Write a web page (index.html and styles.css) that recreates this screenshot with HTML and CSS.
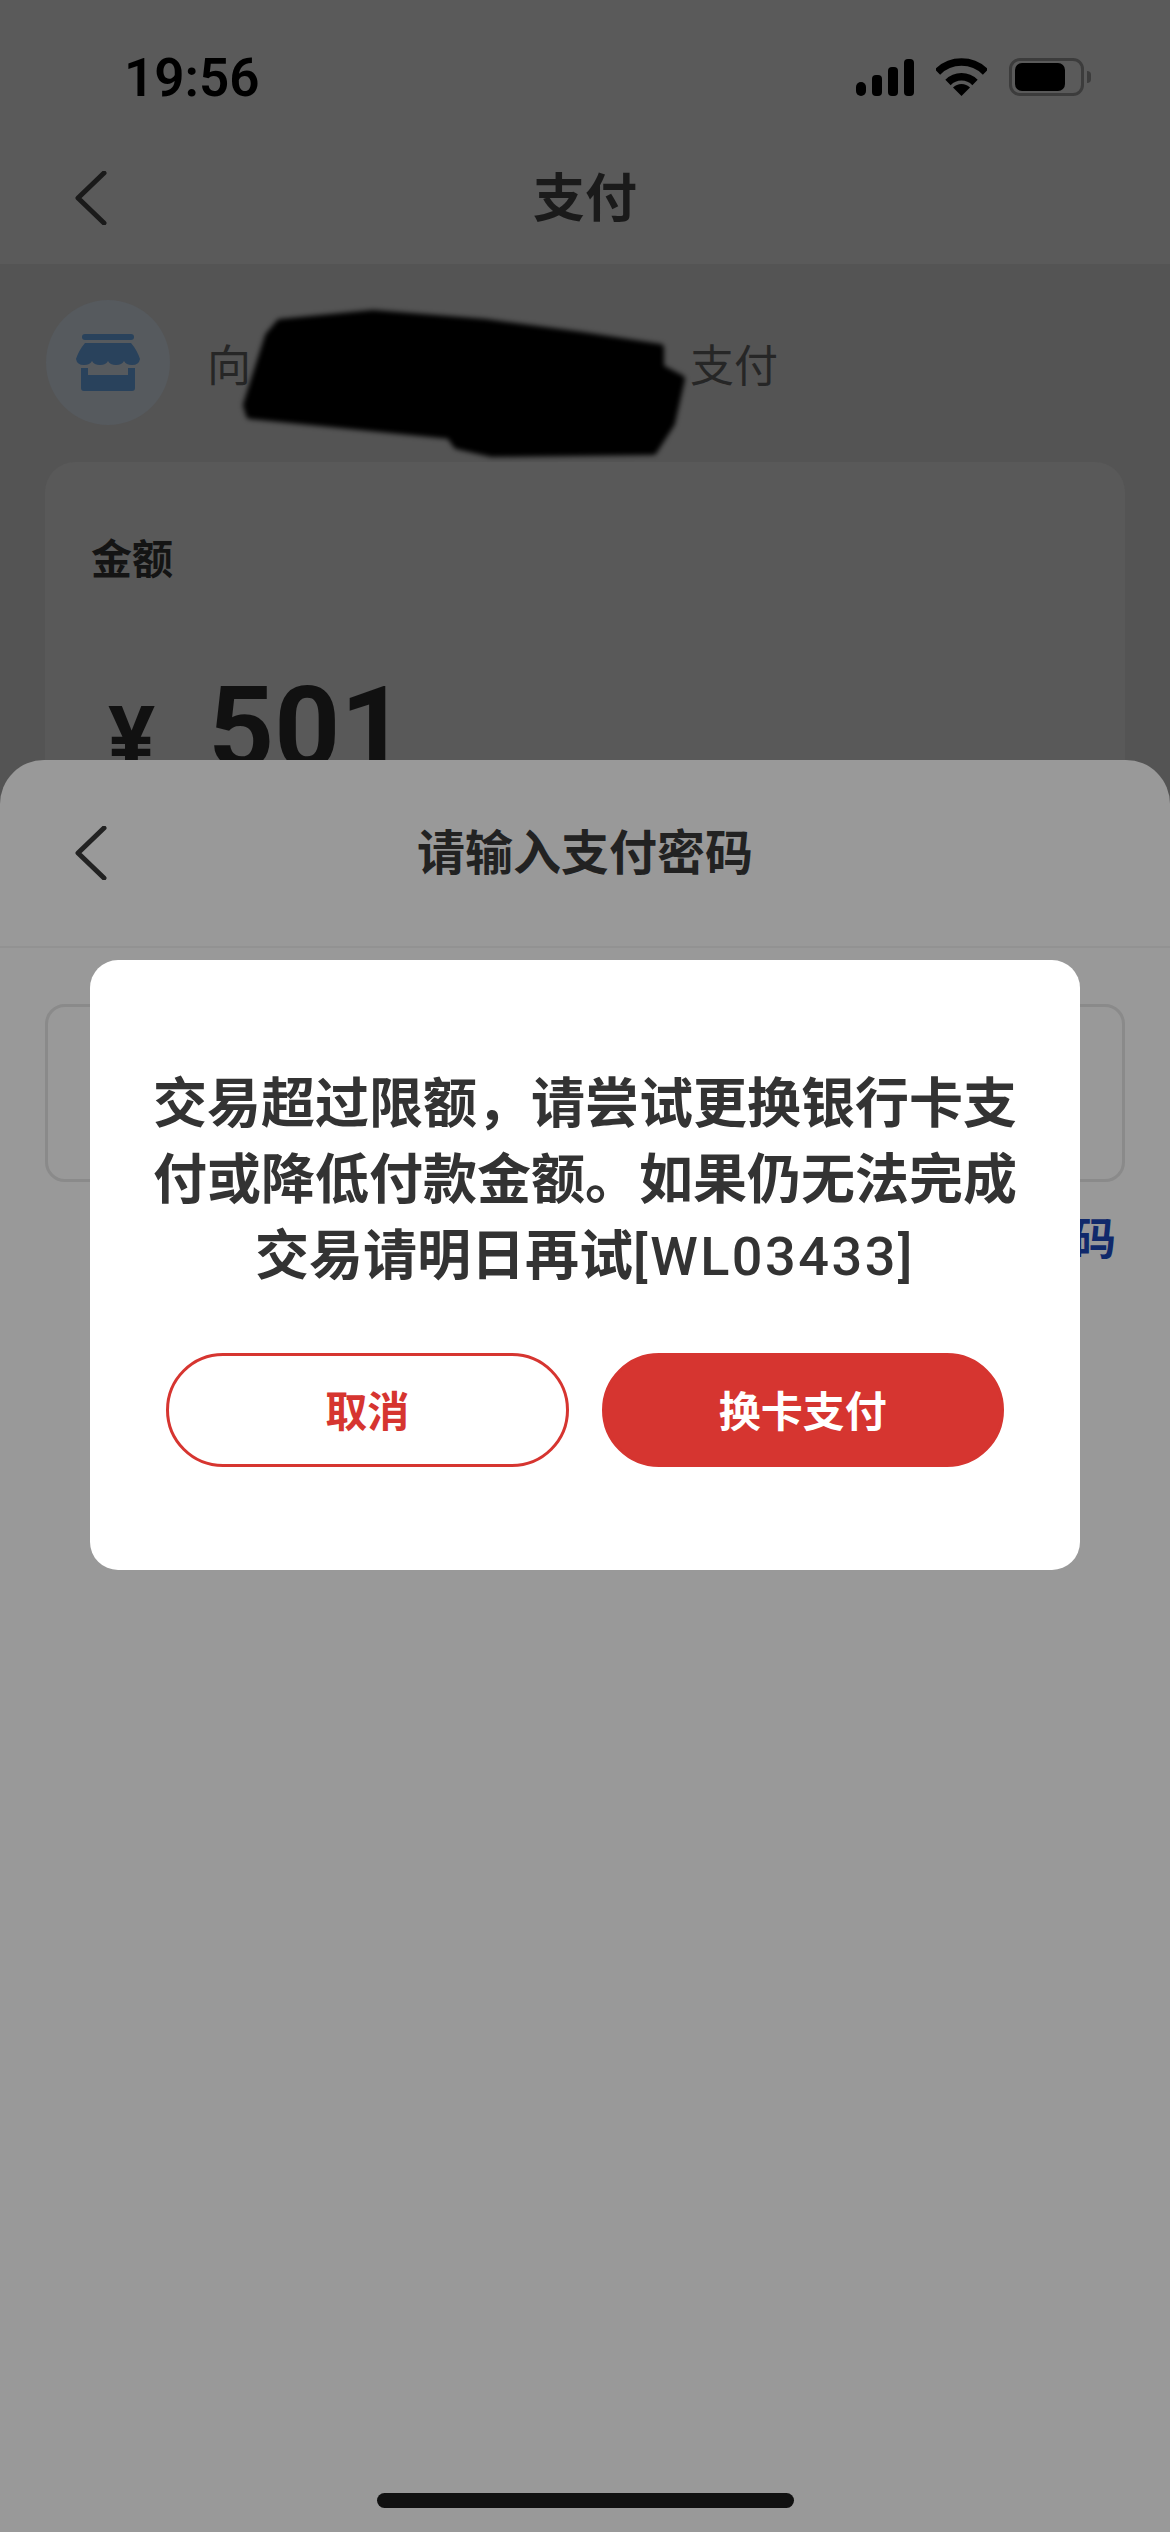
FILE: index.html
```html
<!DOCTYPE html>
<html lang="zh-CN">
<head>
  <meta charset="UTF-8">
  <title>支付</title>
  <link rel="stylesheet" href="styles.css">
</head>
<body>
  <div class="page">
    <!-- 状态栏 -->
    <div class="status-bar">
      <span class="time">19:56</span>
      <div class="status-icons">
        <svg class="signal" width="58" height="37" viewBox="0 0 58 37">
          <rect x="0" y="23" width="10" height="14" rx="5"/>
          <rect x="16" y="16" width="10" height="21" rx="4"/>
          <rect x="32" y="8" width="10" height="29" rx="4"/>
          <rect x="48" y="0" width="10" height="37" rx="4"/>
        </svg>
        <svg class="wifi" width="51" height="38" viewBox="0 0 51 38">
          <path d="M1.5 14 A34 34 0 0 1 49.5 14" fill="none" stroke="#000" stroke-width="7.5"/>
          <path d="M12 24.5 A19 19 0 0 1 39 24.5" fill="none" stroke="#000" stroke-width="7.5"/>
          <path d="M25.5 38 L17 29.5 A12 12 0 0 1 34 29.5 Z"/>
        </svg>
        <div class="battery">
          <div class="battery-body"><div class="battery-fill"></div></div>
          <div class="battery-nub"></div>
        </div>
      </div>
    </div>

    <!-- 导航栏 -->
    <div class="nav">
      <svg class="back" width="32" height="54" viewBox="0 0 32 54">
        <polyline points="29,2 3,27 29,52"/>
      </svg>
      <span class="nav-title">支付</span>
    </div>

    <!-- 收款方 -->
    <div class="merchant">
      <div class="merchant-logo">
        <svg width="66" height="57" viewBox="0 0 66 57">
          <rect x="7" y="0" width="52" height="6" rx="3" fill="#29425c"/>
          <path d="M10 9 H56 Q62 16 65 25 Q64 31 57 31 Q51 31 49 27 Q47 31 41 31 Q35 31 33 27 Q31 31 25 31 Q19 31 17 27 Q15 31 9 31 Q2 31 1 25 Q4 16 10 9 Z" fill="#29425c"/>
          <path d="M6 34 H13 V41 H53 V34 H60 V54 Q60 57 57 57 H9 Q6 57 6 54 Z" fill="#29425c"/>
        </svg>
      </div>
      <div class="merchant-text">
        <span>向</span>
        <span class="merchant-name"></span>
        <span>支付</span>
      </div>
      <!-- 涂黑的商户名 -->
      <svg class="scribble" width="470" height="170" viewBox="0 0 470 170">
        <path d="M48 25 L141 16 L253 25 L350 38 L428 50 L428 70 L449 81 L439 125 L421 153 L260 155 L225 147 L218 137 L18 117 L15 107 L37 38 Z" stroke="#000" stroke-width="8" stroke-linejoin="round"/>
      </svg>
    </div>

    <!-- 金额 -->
    <div class="amount-card">
      <div class="amount-label">金额</div>
      <div class="amount-value">
        <span class="currency">¥</span>
        <span class="amount-num">501</span>
      </div>
    </div>

    <!-- 输入密码弹层 -->
    <div class="sheet">
      <div class="sheet-head">
        <svg class="back" width="32" height="54" viewBox="0 0 32 54">
          <polyline points="29,2 3,27 29,52"/>
        </svg>
        <span class="sheet-title">请输入支付密码</span>
      </div>
      <div class="pwd-box"></div>
      <div class="forgot">码</div>
    </div>

    <!-- 提示框 -->
    <div class="dialog">
      <p class="dialog-text">交易超过限额，请尝试更换银行卡支付或降低付款金额。如果仍无法完成交易请明日再试<span class="code">[WL03433]</span></p>
      <div class="dialog-btns">
        <div class="btn btn-cancel">取消</div>
        <div class="btn btn-ok">换卡支付</div>
      </div>
    </div>

    <div class="home-bar"></div>
  </div>
</body>
</html>
```

FILE: styles.css
```css
* {
  margin: 0;
  padding: 0;
  box-sizing: border-box;
}

body {
  font-family: "Liberation Sans", "Noto Sans CJK SC", sans-serif;
  background-color: #545454;
}

.page {
  position: relative;
  width: 1170px;
  height: 2532px;
  overflow: hidden;
  background-color: #545454;
}

/* 状态栏 */
.status-bar {
  display: flex;
  justify-content: space-between;
  height: 132px;
  padding: 58px 79px 0 124px;
  background-color: #5a5a5a;
}

.time {
  font-family: Roboto, sans-serif;
  font-size: 53px;
  font-weight: 600;
  line-height: 40px;
  color: #000;
}

.status-icons {
  display: flex;
  align-items: flex-start;
  gap: 22px;
}

.signal {
  margin-top: 1px;
}

.battery {
  display: flex;
  align-items: center;
  gap: 3px;
  height: 38px;
}

.battery-body {
  width: 75px;
  height: 38px;
  padding: 2px 3px;
  border: 3px solid #3c3c3c;
  border-radius: 11px;
}

.battery-fill {
  width: 50px;
  height: 100%;
  background-color: #000;
  border-radius: 7px;
}

.battery-nub {
  width: 4px;
  height: 12px;
  background-color: #3c3c3c;
  border-radius: 0 4px 4px 0;
}

/* 导航栏 */
.nav {
  position: relative;
  display: flex;
  align-items: center;
  justify-content: center;
  height: 132px;
  padding-bottom: 8px;
  background-color: #5a5a5a;
}

.back {
  position: absolute;
  left: 75px;
  top: 39px;
}

.back polyline {
  fill: none;
  stroke: #1a1a1a;
  stroke-width: 5;
  stroke-linecap: round;
  stroke-linejoin: round;
}

.nav-title {
  font-size: 52px;
  font-weight: 600;
  color: #1a1a1a;
}

/* 收款方 */
.merchant {
  position: relative;
  display: flex;
  align-items: center;
  gap: 37px;
  margin: 36px 0 37px 46px;
}

.merchant-logo {
  display: flex;
  align-items: center;
  justify-content: center;
  width: 124px;
  height: 125px;
  background-color: #565a5e;
  border-radius: 50%;
}

.merchant-text {
  display: flex;
  align-items: center;
  font-size: 44px;
  color: #262626;
}

.merchant-name {
  width: 439px;
}

.scribble {
  position: absolute;
  left: 186px;
  top: -2px;
  filter: blur(2.5px);
}

/* 金额 */
.amount-card {
  height: 460px;
  margin: 0 45px;
  padding: 70px 46px 0;
  background-color: #595959;
  border-radius: 30px;
}

.amount-label {
  font-size: 41px;
  font-weight: 600;
  line-height: 56px;
  color: #141414;
}

.amount-value {
  display: flex;
  align-items: baseline;
  gap: 53px;
  margin-top: 86px;
  padding-left: 17px;
  color: #111;
  font-family: Roboto, sans-serif;
  font-weight: 700;
}

.currency {
  font-size: 88px;
}

.amount-num {
  font-size: 115px;
  line-height: 110px;
}

/* 输入密码弹层 */
.sheet {
  position: absolute;
  left: 0;
  right: 0;
  top: 760px;
  bottom: 0;
  background-color: #999;
  border-radius: 44px 44px 0 0;
}

.sheet-head {
  position: relative;
  display: flex;
  align-items: center;
  justify-content: center;
  height: 188px;
  padding-bottom: 8px;
  border-bottom: 2px solid #929292;
}

.sheet-head .back {
  top: 66px;
}

.sheet-head .back polyline {
  stroke: #222;
}

.sheet-title {
  font-size: 48px;
  font-weight: 600;
  color: #222;
}

.pwd-box {
  height: 178px;
  margin: 56px 45px 0;
  border: 3px solid #8a8a8a;
  border-radius: 20px;
}

.forgot {
  margin-top: 28px;
  padding-right: 54px;
  font-size: 44px;
  font-weight: 600;
  line-height: 60px;
  text-align: right;
  color: #10296b;
}

/* 提示框 */
.dialog {
  position: absolute;
  left: 90px;
  top: 960px;
  width: 990px;
  height: 610px;
  padding-top: 106px;
  background-color: #fff;
  border-radius: 28px;
}

.dialog-text {
  height: 228px;
  padding: 0 62px;
  font-size: 54px;
  font-weight: 600;
  line-height: 76px;
  text-align: center;
  color: #333;
}

.code {
  font-family: Roboto, sans-serif;
  font-weight: 500;
  letter-spacing: 2.5px;
}

.dialog-btns {
  display: flex;
  gap: 33px;
  margin-top: 59px;
  padding: 0 76px;
}

.btn {
  display: flex;
  align-items: center;
  justify-content: center;
  flex: 1;
  height: 114px;
  padding-bottom: 4px;
  border: 3px solid #d63530;
  border-radius: 57px;
  font-size: 42px;
  font-weight: 600;
}

.btn-cancel {
  color: #d63530;
  background-color: #fff;
}

.btn-ok {
  color: #fff;
  background-color: #d63530;
}

.home-bar {
  position: absolute;
  left: 377px;
  top: 2493px;
  width: 417px;
  height: 15px;
  background-color: #111;
  border-radius: 8px;
}
```
